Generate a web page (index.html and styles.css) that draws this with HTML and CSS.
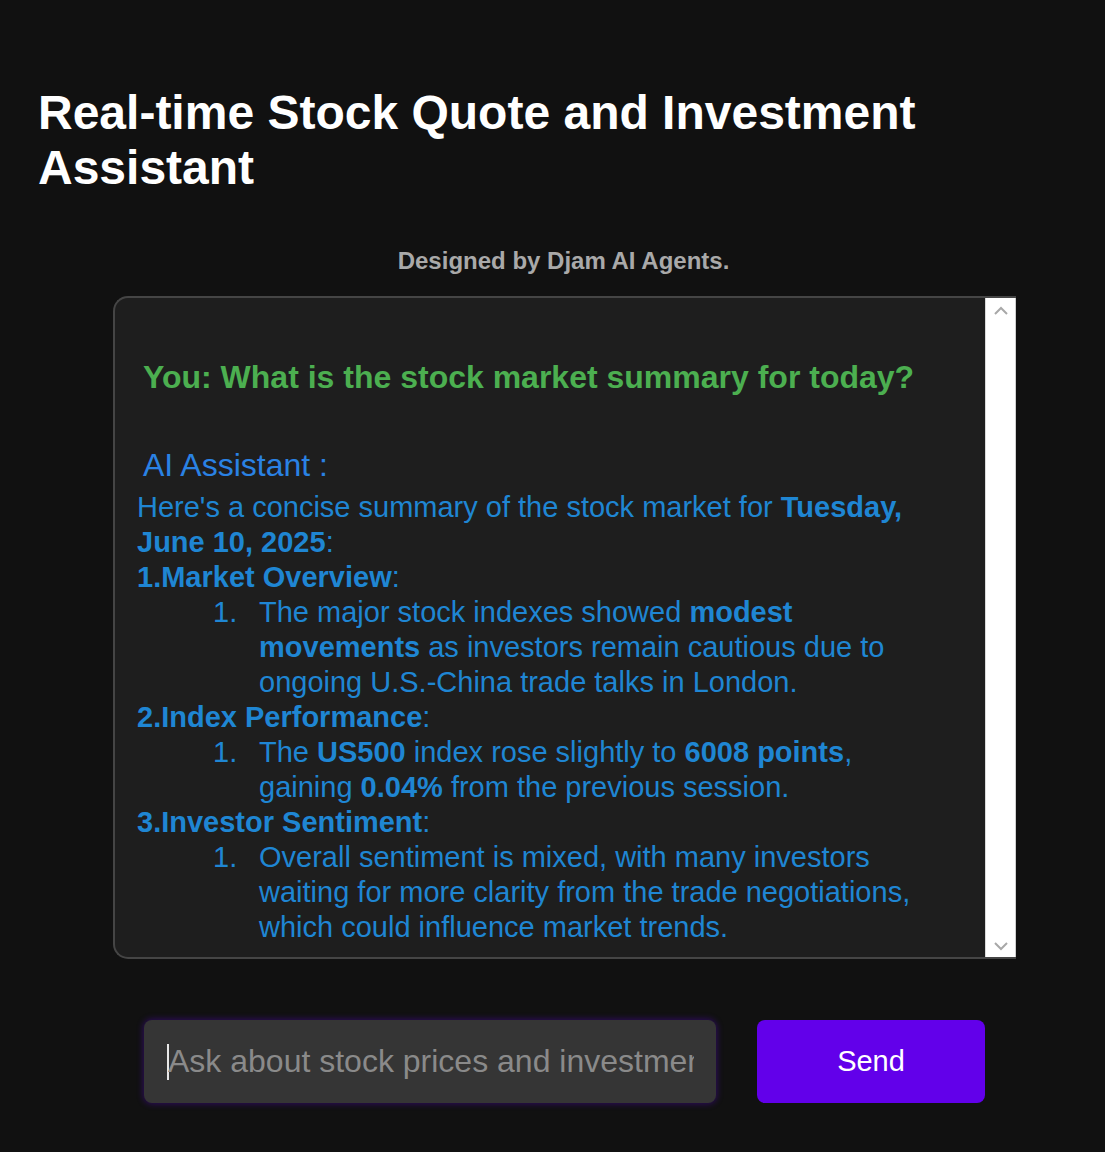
FILE: index.html
```html
<!DOCTYPE html>
<html>
<head>
<meta charset="utf-8">
<link rel="stylesheet" href="styles.css">
</head>
<body>
<div class="page">
  <h1 class="title">Real-time Stock Quote and Investment Assistant</h1>
  <p class="credit">Designed by Djam AI Agents.</p>
  <div class="chat">
    <div class="chat-content">
      <div class="you">You: What is the stock market summary for today?</div>
      <div class="ai-label">AI Assistant :</div>
      <div class="answer">
        <p class="intro">Here's a concise summary of the stock market for <b>Tuesday, June 10, 2025</b>:</p>
        <p class="head"><b>1.Market Overview</b>:</p>
        <ol><li>The major stock indexes showed <b>modest movements</b> as investors remain cautious due to ongoing U.S.-China trade talks in London.</li></ol>
        <p class="head"><b>2.Index Performance</b>:</p>
        <ol><li>The <b>US500</b> index rose slightly to <b>6008 points</b>, gaining <b>0.04%</b> from the previous session.</li></ol>
        <p class="head"><b>3.Investor Sentiment</b>:</p>
        <ol><li>Overall sentiment is mixed, with many investors waiting for more clarity from the trade negotiations, which could influence market trends.</li></ol>
      </div>
    </div>
    <div class="scrollbar">
      <svg class="arrow" width="16" height="10" viewBox="0 0 16 10"><path d="M2 8 L8 2 L14 8" fill="none" stroke="#a8a8a8" stroke-width="2"/></svg>
      <svg class="arrow" width="16" height="10" viewBox="0 0 16 10"><path d="M2 2 L8 8 L14 2" fill="none" stroke="#a8a8a8" stroke-width="2"/></svg>
    </div>
  </div>
  <div class="input-row">
    <div class="input"><span class="caret"></span><span class="placeholder">Ask about stock prices and investment advice...</span></div>
    <button class="send">Send</button>
  </div>
</div>
</body>
</html>
```

FILE: styles.css
```css
* { box-sizing: border-box; }
html, body {
  margin: 0;
  padding: 0;
  background: #111111;
  font-family: "Liberation Sans", Arial, sans-serif;
}
.page {
  width: 1105px;
  height: 1152px;
  padding-top: 85px;
  overflow: hidden;
}
.title {
  margin: 0 0 0 38px;
  color: #ffffff;
  font-size: 48px;
  line-height: 55px;
  font-weight: bold;
  width: 960px;
}
.credit {
  margin: 52px 0 0 0;
  padding-left: 22px;
  text-align: center;
  color: #a9a9a9;
  font-weight: bold;
  font-size: 24px;
  line-height: 28px;
}
.chat {
  margin: 21px 0 0 113px;
  width: 903px;
  height: 663px;
  background: #1e1e1e;
  border: 2px solid #454545;
  border-right: none;
  border-radius: 15px 0 0 15px;
  display: flex;
  overflow: hidden;
}
.chat-content {
  flex: 1;
  padding: 59px 66px 0 22px;
}
.scrollbar {
  width: 31px;
  background: #ffffff;
  display: flex;
  flex-direction: column;
  justify-content: space-between;
  align-items: center;
  padding: 8px 0 6px;
  border-left: 1px solid #d9d9d9;
  border-right: 1px solid #cfcfcf;
}
.you {
  color: #4caf50;
  font-weight: bold;
  font-size: 32px;
  line-height: 40px;
  padding-left: 6px;
  white-space: nowrap;
}
.ai-label {
  margin-top: 48px;
  color: #2a82e4;
  font-size: 32px;
  line-height: 40px;
  padding-left: 6px;
}
.answer {
  color: #1f86d3;
  font-size: 29px;
  line-height: 35px;
  padding-top: 5px;
}
.answer p { margin: 0; }
.answer ol {
  margin: 0;
  padding-left: 76px;
  list-style: none;
}
.answer li {
  padding-left: 46px;
  text-indent: -46px;
}
.answer li::before {
  content: "1.";
  display: inline-block;
  width: 46px;
  text-indent: 0;
}
.input-row {
  display: flex;
  gap: 41px;
  margin: 61px 0 0 144px;
}
.input {
  width: 572px;
  height: 83px;
  background: #353535;
  border-radius: 8px;
  box-shadow: 0 0 6px 1px rgba(98, 0, 234, 0.35);
  display: flex;
  align-items: center;
  padding-left: 23px;
  overflow: hidden;
  white-space: nowrap;
}
.caret {
  width: 2px;
  height: 36px;
  background: #e8e8e8;
  flex: none;
}
.placeholder {
  color: #8a8a8a;
  font-size: 32px;
  margin-left: -1px;
  overflow: hidden;
  width: 526px;
  flex: none;
}
.send {
  width: 228px;
  height: 83px;
  background: #6200ea;
  border: none;
  border-radius: 8px;
  color: #ffffff;
  font-family: "Liberation Sans", Arial, sans-serif;
  font-size: 29px;
  padding: 0;
}
```
